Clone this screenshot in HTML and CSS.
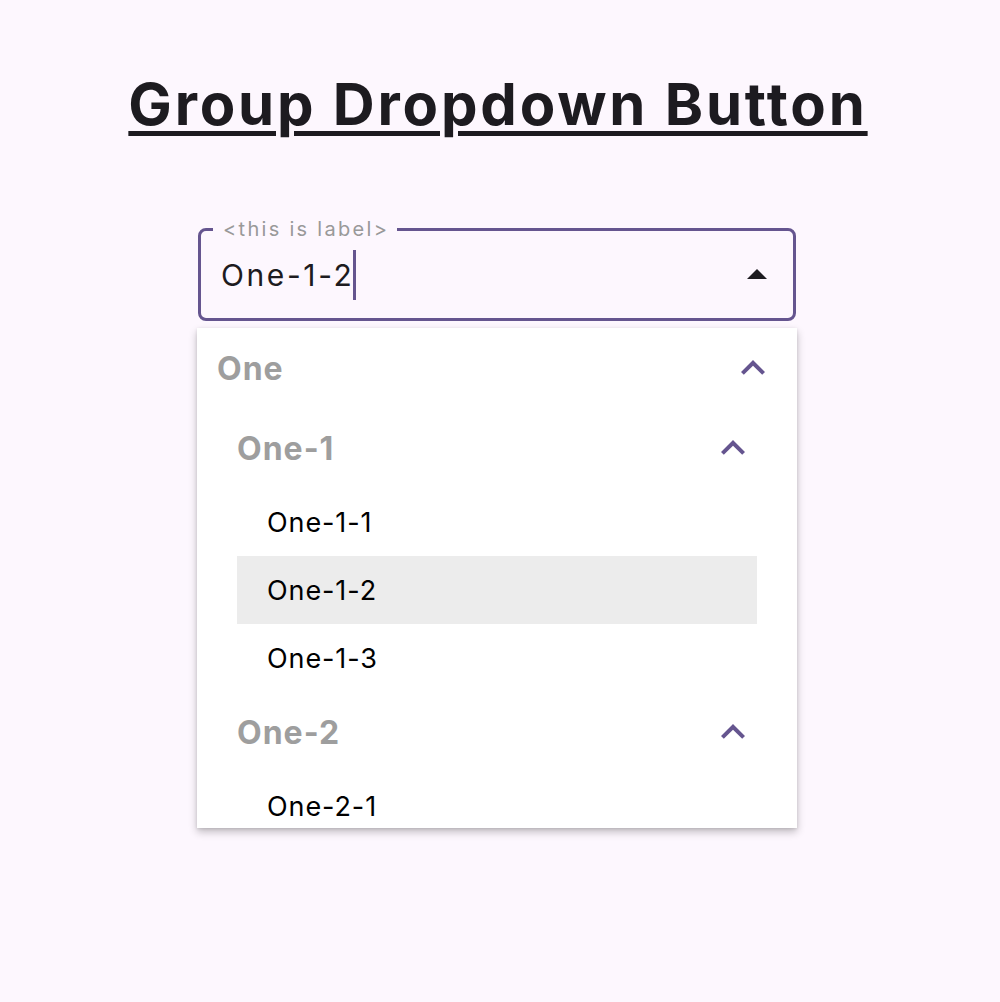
FILE: index.html
```html
<!DOCTYPE html>
<html>
<head>
<meta charset="utf-8">
<link rel="stylesheet" href="styles.css">
</head>
<body>
<main class="page">
  <h1 class="title">Group Dropdown Button</h1>
  <div class="field">
    <div class="outline">
      <span class="label">&lt;this is label&gt;</span>
      <span class="value">One-1-2</span><span class="cursor"></span>
      <svg class="arrow" width="48" height="48" viewBox="0 0 24 24"><path d="M7 14l5-5 5 5z" fill="#1d1b20"/></svg>
    </div>
    <div class="menu">
      <div class="group-head lvl1"><span>One</span>
        <svg class="chev" width="48" height="48" viewBox="0 0 24 24"><path d="M12 8l-6 6 1.41 1.41L12 10.83l4.59 4.58L18 14z" fill="#65558f"/></svg>
      </div>
      <div class="group-head lvl2"><span>One-1</span>
        <svg class="chev" width="48" height="48" viewBox="0 0 24 24"><path d="M12 8l-6 6 1.41 1.41L12 10.83l4.59 4.58L18 14z" fill="#65558f"/></svg>
      </div>
      <div class="item">One-1-1</div>
      <div class="item selected">One-1-2</div>
      <div class="item">One-1-3</div>
      <div class="group-head lvl2"><span>One-2</span>
        <svg class="chev" width="48" height="48" viewBox="0 0 24 24"><path d="M12 8l-6 6 1.41 1.41L12 10.83l4.59 4.58L18 14z" fill="#65558f"/></svg>
      </div>
      <div class="item">One-2-1</div>
    </div>
  </div>
</main>
</body>
</html>
```
FILE: styles.css
```css
html, body {
  margin: 0;
  padding: 0;
  background: #fdf7fe;
}
body {
  width: 1000px;
  height: 1002px;
  overflow: hidden;
  font-family: Inter, "Liberation Sans", sans-serif;
}
.page {
  display: flex;
  flex-direction: column;
  align-items: center;
  padding-top: 69px;
  padding-right: 6px;
}
.title {
  margin: 0;
  padding-left: 2px;
  font-family: Inter, "Liberation Sans", sans-serif;
  font-weight: 700;
  font-size: 58px;
  line-height: 70px;
  letter-spacing: 2.8px;
  color: #1d1b20;
  text-decoration: underline;
  text-decoration-thickness: 5px;
  text-underline-offset: 6px;
}
.field {
  margin-top: 89px;
  width: 600px;
  display: flex;
  flex-direction: column;
}
.outline {
  position: relative;
  margin: 0 1px;
  height: 93px;
  box-sizing: border-box;
  border: 3px solid #65558f;
  border-radius: 8px;
  display: flex;
  align-items: center;
  padding: 0 12px 0 20px;
}
.label {
  position: absolute;
  left: 12px;
  top: -15px;
  padding: 0 8px 0 10px;
  background: #fdf7fe;
  font-size: 20px;
  line-height: 26px;
  letter-spacing: 2.3px;
  color: #999999;
}
.value {
  font-size: 30px;
  letter-spacing: 2.6px;
  color: #1d1b20;
}
.cursor {
  width: 3px;
  height: 50px;
  background: #65558f;
  margin-left: -1px;
}
.arrow {
  margin-left: auto;
}
.menu {
  margin-top: 7px;
  height: 500px;
  overflow: hidden;
  background: #ffffff;
  box-shadow: 0 4px 8px rgba(0,0,0,0.24), 0 1px 3px rgba(0,0,0,0.10);
}
.group-head {
  height: 80px;
  display: flex;
  align-items: center;
  justify-content: space-between;
  font-weight: 700;
  font-size: 32px;
  letter-spacing: 1px;
  color: #9e9e9e;
}
.lvl1 { padding: 0 20px 0 20px; }
.lvl2 { padding: 0 40px 0 40px; }
.item {
  height: 68px;
  display: flex;
  align-items: center;
  margin: 0 40px;
  padding-left: 30px;
  font-size: 27px;
  letter-spacing: 0.9px;
  color: #000000;
}
.item.selected {
  background: #ececec;
}
```
